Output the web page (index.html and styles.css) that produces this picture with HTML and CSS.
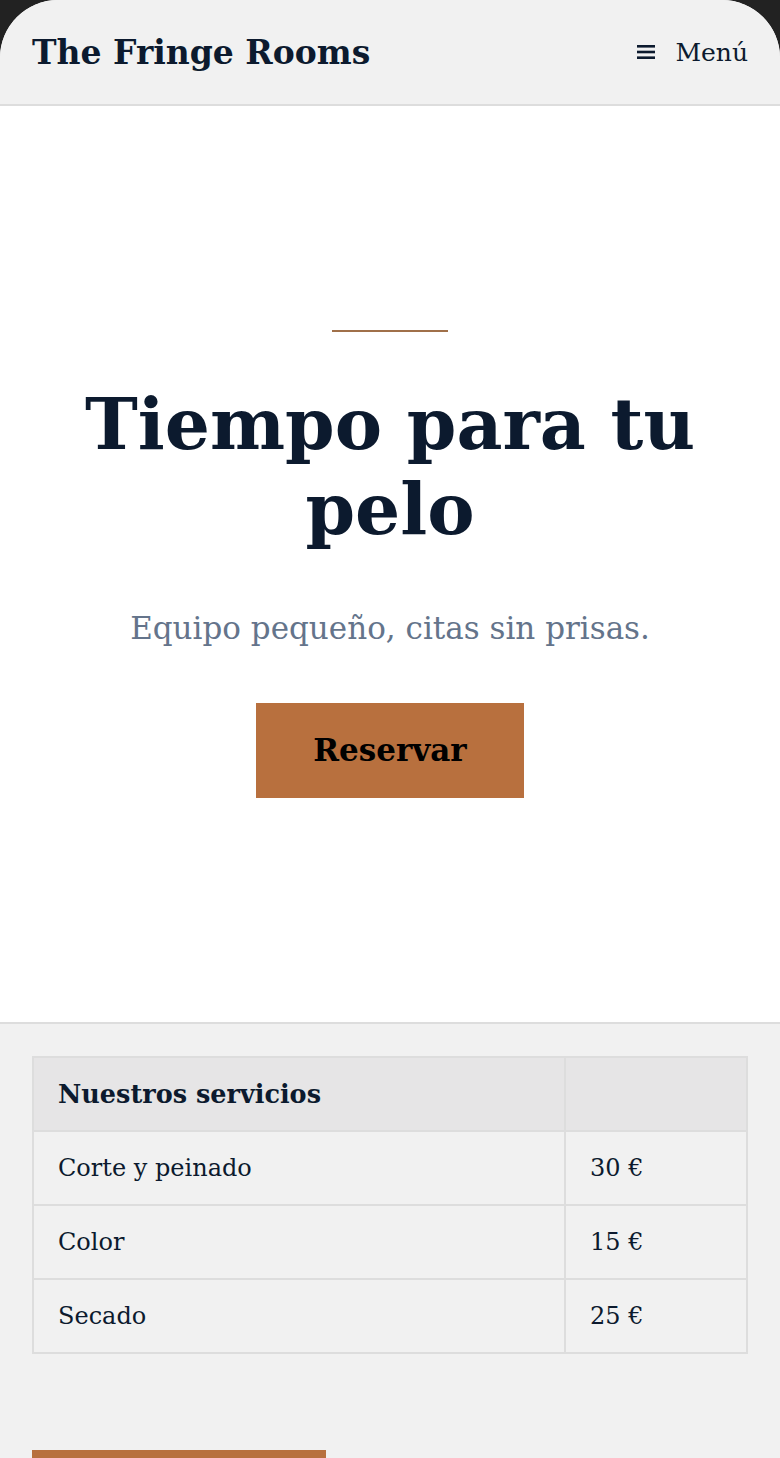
FILE: index.html
```html
<!DOCTYPE html>
<html lang="es">

<head>
    <title>The Fringe Rooms</title>
    <meta name="viewport" content="width=device-width, initial-scale=1.0">
    <meta charset="UTF-8">
    <link rel="stylesheet" href="styles.css">
</head>

<body>
<div class="page">
    <header class="site-header">
        <a class="brand" href="#">The Fringe Rooms</a>
        <button class="menu-toggle" type="button">
            <svg class="menu-icon" viewBox="0 0 18 16" aria-hidden="true">
                <rect x="0" y="1" width="18" height="2.6" />
                <rect x="0" y="6.7" width="18" height="2.6" />
                <rect x="0" y="12.4" width="18" height="2.6" />
            </svg>
            <span>Menú</span>
        </button>
    </header>

    <section class="hero">
        <div class="rule"></div>
        <h1>Tiempo para tu pelo</h1>
        <p class="lead">Equipo pequeño, citas sin prisas.</p>
        <a class="btn" href="#">Reservar</a>
    </section>

    <section class="services">
        <table class="price-table">
            <thead>
                <tr>
                    <th>Nuestros servicios</th>
                    <th></th>
                </tr>
            </thead>
            <tbody>
                <tr>
                    <td>Corte y peinado</td>
                    <td class="price">30 €</td>
                </tr>
                <tr>
                    <td>Color</td>
                    <td class="price">15 €</td>
                </tr>
                <tr>
                    <td>Secado</td>
                    <td class="price">25 €</td>
                </tr>
            </tbody>
        </table>
        <a class="btn btn-block" href="#">Pedir cita</a>
    </section>
</div>
</body>

</html>
```

FILE: styles.css
```css
:root {
    --ink: #0c1a2e;
    --muted: #64748b;
    --accent: #b8703e;
    --rule: #a0704a;
    --paper: #f1f1f1;
    --line: #dddddd;
}

body {
    margin: 0;
    background: #222222;
    font-family: "DejaVu Serif", Georgia, serif;
    color: var(--ink);
}

.page {
    background: #ffffff;
    border-radius: 58px 58px 0 0;
    overflow: hidden;
    min-height: 1458px;
}

.site-header {
    height: 106px;
    padding: 0 32px;
    box-sizing: border-box;
    display: flex;
    justify-content: space-between;
    align-items: center;
    background: var(--paper);
    border-bottom: 2px solid var(--line);
}

.brand {
    font-size: 33px;
    font-weight: 700;
    color: var(--ink);
    text-decoration: none;
}

.menu-toggle {
    display: flex;
    align-items: center;
    gap: 20px;
    border: none;
    background: none;
    padding: 0;
    font-family: inherit;
    font-size: 25px;
    color: var(--ink);
}

.menu-icon {
    width: 18px;
    height: 16px;
    fill: var(--ink);
}

.hero {
    height: 916px;
    box-sizing: border-box;
    padding: 224px 32px 0;
    text-align: center;
}

.rule {
    width: 116px;
    height: 2px;
    margin: 0 auto 50px;
    background: var(--rule);
}

h1 {
    margin: 0;
    font-size: 71px;
    line-height: 85px;
    font-weight: 700;
}

.lead {
    margin: 58px 0 57px;
    font-size: 31px;
    color: var(--muted);
}

.btn {
    display: inline-block;
    padding: 0 57px;
    height: 95px;
    line-height: 95px;
    background: var(--accent);
    color: #000000;
    font-size: 31px;
    font-weight: 700;
    text-decoration: none;
}

.services {
    background: var(--paper);
    border-top: 2px solid var(--line);
    padding: 32px 32px 40px;
}

.price-table {
    width: 100%;
    border-collapse: collapse;
    border: 2px solid var(--line);
    font-size: 24px;
}

.price-table th,
.price-table td {
    height: 74px;
    box-sizing: border-box;
    padding: 0 24px;
    border: 2px solid var(--line);
    text-align: left;
}

.price-table th {
    background: #e6e5e6;
    font-size: 25.5px;
    font-weight: 700;
}

.price-table .price {
    width: 182px;
}

.btn-block {
    display: block;
    width: 294px;
    box-sizing: border-box;
    margin-top: 96px;
    text-align: center;
    padding: 0;
}
```
